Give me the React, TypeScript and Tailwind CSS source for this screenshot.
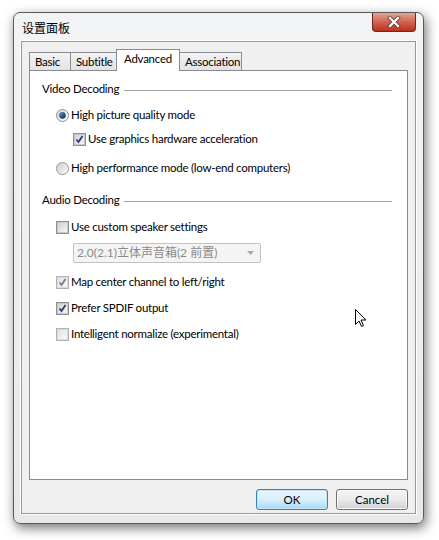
import React from "react";

const font = { fontFamily: 'Lato, "Noto Sans CJK SC", sans-serif' };

function Radio({ checked }: { checked?: boolean }) {
  return (
    <div className="w-[13px] h-[13px] rounded-full border border-[#8e8f8f] bg-gradient-to-br from-[#d6d6d6] to-[#ffffff] flex items-center justify-center shrink-0">
      {checked ? (
        <div className="w-[7px] h-[7px] rounded-full bg-gradient-to-br from-[#8ab6dc] via-[#2a5d8e] to-[#0f3a66] border border-[#1d4b7a]" />
      ) : (
        <div className="w-[9px] h-[9px] rounded-full bg-gradient-to-br from-[#cfcfcf] to-[#f6f6f6]" />
      )}
    </div>
  );
}

function Check({ checked, dim }: { checked?: boolean; dim?: boolean }) {
  return (
    <div className={`w-[13px] h-[13px] border ${dim ? "border-[#b1b1b1]" : "border-[#8e8f8f]"} bg-white flex items-center justify-center shrink-0`}>
      <div className={`w-[11px] h-[11px] border ${dim ? "border-[#dcdcdc] from-[#e2e2e2] to-[#f9f9f9]" : "border-[#c8c8c8] from-[#d2d2d2] to-[#f6f6f6]"} bg-gradient-to-br relative`}>
        {checked && (
          <svg width="11" height="11" viewBox="0 0 11 11" className="absolute -left-[1px] -top-[1px]">
            <path d="M2.5 5.5 L4.5 8 L8.5 2" fill="none" stroke={dim ? "#6f7d98" : "#2a3e78"} strokeWidth="1.8" />
          </svg>
        )}
      </div>
    </div>
  );
}

function Row({ children, className }: { children: React.ReactNode; className: string }) {
  return <div className={`flex items-center h-[16px] gap-[2px] text-[11.5px] tracking-[-0.25px] text-black ${className}`}>{children}</div>;
}

function Group({ title, className }: { title: string; className: string }) {
  return (
    <div className={`flex items-center h-[16px] pl-[12px] pr-[15px] text-[11.5px] tracking-[-0.25px] text-black ${className}`}>
      <span className="whitespace-nowrap">{title}</span>
      <div className="flex-1 h-px bg-[#a0a0a0] ml-[5px] mt-[3px]" />
    </div>
  );
}

export default function App() {
  return (
    <div className="w-[439px] h-[540px] bg-white pt-[12px] pl-[13px] relative" style={font}>
      <div className="w-[411px] h-[512px] rounded-[7px] border border-[#555b60] bg-gradient-to-b from-[#f2f3f4] via-[#eceef0] to-[#e6e8ea] shadow-[2px_4px_12px_rgba(0,0,0,0.55)] relative flex flex-col">
        {/* title bar */}
        <div className="h-[28px] flex items-center pl-[8px] relative">
          <span className="text-[12px] text-black mt-[1px]" style={{ fontFamily: '"Noto Sans CJK SC", sans-serif' }}>设置面板</span>
          <div className="absolute right-[7px] top-0 w-[44px] h-[19px] rounded-b-[4px] border border-[#6a2a22] border-t-0 bg-gradient-to-b from-[#e8a395] via-[#d0624f] to-[#b8321e] flex items-center justify-center">
            <svg width="16" height="12" viewBox="0 0 16 12">
              <path d="M4 2 L12 10 M12 2 L4 10" stroke="#4a2a25" strokeWidth="3.8" strokeLinecap="square" />
              <path d="M4 2 L12 10 M12 2 L4 10" stroke="#ffffff" strokeWidth="2.4" strokeLinecap="square" />
            </svg>
          </div>
        </div>
        {/* client area */}
        <div className="mx-[7px] mb-[9px] flex-1 border border-[#8e9aa5] bg-[#f0f0f0] flex flex-col px-[7px] pt-[7px] shadow-[0_0_0_1px_#ffffff]">
          {/* tabs */}
          <div className="flex items-start h-[21px] text-[11.5px] tracking-[-0.25px] text-black relative z-10">
            <div className="mt-[3px] h-[18px] w-[42px] border border-[#898c95] border-b-0 bg-gradient-to-b from-[#f3f3f3] to-[#e3e3e3] pl-[5px] leading-[18px]">Basic</div>
            <div className="mt-[3px] h-[18px] w-[46px] border border-[#898c95] border-b-0 border-l-0 bg-gradient-to-b from-[#f3f3f3] to-[#e3e3e3] pl-[5px] leading-[18px]">Subtitle</div>
            <div className="relative z-10 h-[22px] w-[64px] -ml-[1px] border border-[#898c95] border-b-0 bg-white pl-[7px] leading-[17px]">Advanced</div>
            <div className="mt-[3px] -ml-[1px] h-[18px] w-[63px] border border-[#898c95] border-b-0 bg-gradient-to-b from-[#f3f3f3] to-[#e3e3e3] pl-[5px] leading-[18px]">Association</div>
          </div>
          {/* panel */}
          <div className="h-[410px] border border-[#898c95] bg-white flex flex-col">
            <Group title="Video Decoding" className="mt-[10px]" />
            <Row className="mt-[10px] pl-[26px]"><Radio checked /><span>High picture quality mode</span></Row>
            <Row className="mt-[8px] pl-[43px]"><Check checked /><span>Use graphics hardware acceleration</span></Row>
            <Row className="mt-[13px] pl-[26px]"><Radio /><span>High performance mode (low-end computers)</span></Row>
            <Group title="Audio Decoding" className="mt-[16px]" />
            <Row className="mt-[11px] pl-[26px]"><Check /><span>Use custom speaker settings</span></Row>
            <div className="mt-[8px] ml-[43px] w-[188px] h-[20px] border border-[#c2c2c2] rounded-[2px] bg-[#f4f4f4] flex items-center pl-[3px] pr-[6px] text-[12px] text-[#8a8a8a]">
              <span className="flex-1">2.0(2.1)立体声音箱(2 前置)</span>
              <svg width="7" height="4" viewBox="0 0 7 4"><path d="M0 0 L7 0 L3.5 4 Z" fill="#a8a8a8" /></svg>
            </div>
            <Row className="mt-[11px] pl-[26px]"><Check checked dim /><span>Map center channel to left/right</span></Row>
            <Row className="mt-[10px] pl-[26px]"><Check checked /><span>Prefer SPDIF output</span></Row>
            <Row className="mt-[10px] pl-[26px]"><Check dim /><span>Intelligent normalize (experimental)</span></Row>
          </div>
          {/* buttons */}
          <div className="flex justify-end gap-[8px] mt-[9px] text-[11.5px]">
            <div className="w-[72px] h-[21px] rounded-[3px] border border-[#3c7fb1] bg-gradient-to-b from-[#eaf6fd] via-[#d7effc] to-[#a7d9f5] shadow-[inset_0_0_0_1px_#c4e5f6] flex items-center justify-center">OK</div>
            <div className="w-[72px] h-[21px] rounded-[3px] border border-[#707070] bg-gradient-to-b from-[#f2f2f2] via-[#ebebeb] to-[#cfcfcf] shadow-[inset_0_0_0_1px_#fcfcfc] flex items-center justify-center">Cancel</div>
          </div>
        </div>
      </div>
      {/* cursor */}
      <svg className="absolute left-[355px] top-[309px]" width="12" height="19" viewBox="0 0 12 19">
        <path d="M0.5 0.5 L0.5 15.5 L4 12 L6.5 17.5 L8.5 16.5 L6 11 L11 11 Z" fill="#ffffff" stroke="#000000" strokeWidth="1" strokeLinejoin="miter" />
      </svg>
    </div>
  );
}
